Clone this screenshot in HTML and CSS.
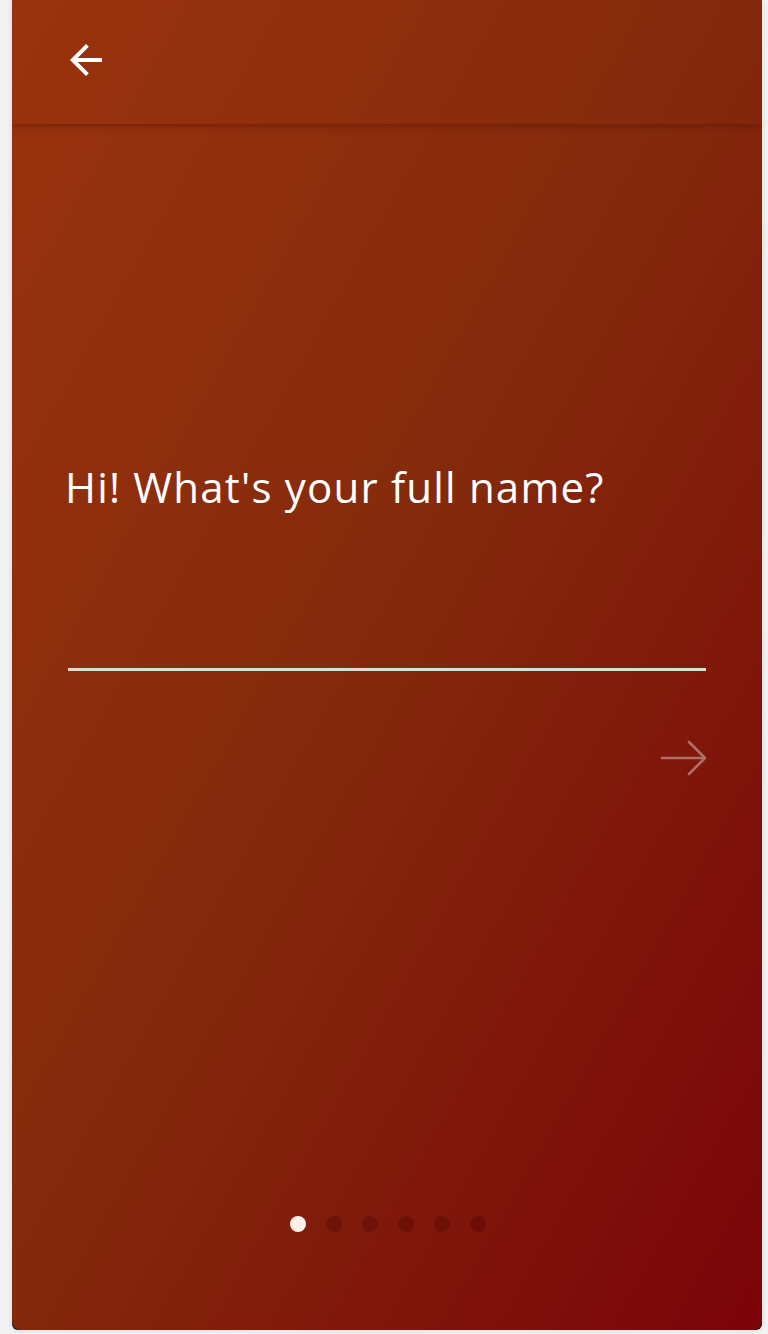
FILE: index.html
```html
<!DOCTYPE html>
<html lang="en">
<head>
<meta charset="utf-8">
<title>Full name</title>
<link rel="stylesheet" href="styles.css">
</head>
<body>
<div class="device">
  <div class="screen">
    <header class="appbar">
      <button class="back" aria-label="Back">
        <svg viewBox="0 0 24 24" width="48" height="48"><path fill="#fff" d="M20 11H7.83l5.59-5.59L12 4l-8 8 8 8 1.41-1.41L7.83 13H20v-2z"/></svg>
      </button>
    </header>
    <main class="content">
      <h1 class="question">Hi! What's your full name?</h1>
      <div class="field"></div>
      <div class="actions">
        <svg class="next" viewBox="0 0 48 36" width="48" height="36"><path d="M2 18H45M29 2L45 18L29 34" fill="none" stroke="rgba(255,255,255,0.38)" stroke-width="2.6" stroke-linecap="round" stroke-linejoin="round"/></svg>
      </div>
    </main>
    <nav class="dots">
      <span class="dot active"></span>
      <span class="dot"></span>
      <span class="dot"></span>
      <span class="dot"></span>
      <span class="dot"></span>
      <span class="dot"></span>
    </nav>
  </div>
</div>
</body>
</html>
```
FILE: styles.css
```css
html, body {
  margin: 0;
  padding: 0;
}
body {
  background: #f3f3f3;
  width: 768px;
  height: 1334px;
  overflow: hidden;
  font-family: "Open Sans", "Noto Sans", sans-serif;
}
.device {
  margin-left: 12px;
  width: 750px;
  height: 1330px;
  background: #151515;
  border-radius: 0 0 6px 6px;
  box-shadow: 0 0 6px rgba(0,0,0,0.12);
}
.screen {
  width: 750px;
  height: 1330px;
  border-radius: 0 0 9px 9px;
  overflow: hidden;
  display: flex;
  flex-direction: column;
  background: linear-gradient(to bottom right, #9a330e 0%, #842a0c 48%, #7b0309 100%);
}
.appbar {
  height: 120px;
  padding-bottom: 4px;
  flex: none;
  display: flex;
  align-items: center;
  padding-left: 50px;
  box-shadow: 0 3px 6px rgba(70, 15, 0, 0.35);
  position: relative;
  z-index: 1;
}
.back {
  background: none;
  border: 0;
  padding: 0;
  width: 48px;
  height: 48px;
  display: flex;
}
.content {
  flex: 1;
  display: flex;
  flex-direction: column;
  padding: 0 56px 0 56px;
}
.question {
  margin: 339px 0 0 -3px;
  font-weight: 400;
  font-size: 42px;
  line-height: 48px;
  letter-spacing: 1.2px;
  color: #fff;
  white-space: nowrap;
}
.field {
  margin-top: 157px;
  height: 3px;
  background: #dcdcdc;
}
.actions {
  display: flex;
  justify-content: flex-end;
  margin-top: 69px;
  margin-right: -2px;
}
.dots {
  flex: none;
  display: flex;
  justify-content: center;
  gap: 20px;
  padding-bottom: 98px;
  padding-left: 2px;
}
.dot {
  width: 16px;
  height: 16px;
  border-radius: 50%;
  background: rgba(60, 0, 0, 0.28);
}
.dot.active {
  background: #fcf1ea;
}
```
